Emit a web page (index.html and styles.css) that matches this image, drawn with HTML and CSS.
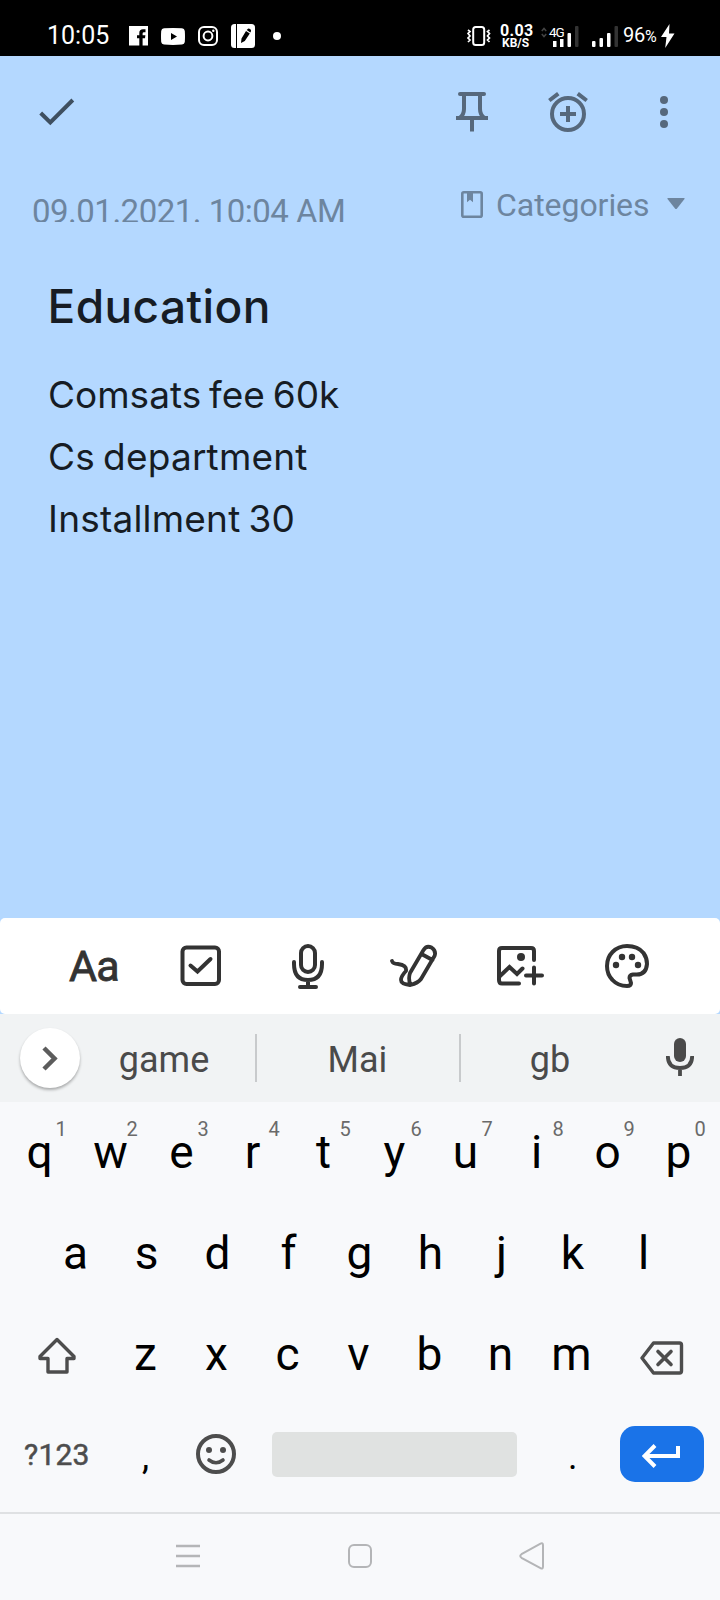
FILE: index.html
```html
<!DOCTYPE html>
<html lang="en">
<head>
<meta charset="utf-8">
<title>Note</title>
<link rel="stylesheet" href="styles.css">
</head>
<body>
<div class="screen">
  <div class="status">
    <span class="clock">10:05</span>
    <svg class="st-fb" width="20" height="20" viewBox="0 0 20 20"><path fill="#fff" d="M0 0H19V19.5H13.6V12.3H16L16.4 9.2H13.6V7.4Q13.6 6.2 15 6.2H16.5V3.3H14Q10.3 3.3 10.3 7V9.2H8V12.3H10.3V19.5H0Z"/></svg>
    <svg class="st-yt" width="24" height="17" viewBox="0 0 24 17"><path fill="#fff" fill-rule="evenodd" d="M3 .3Q12-.3 21 .3Q23.5.6 23.8 3Q24.2 8.500 23.800 14Q23.500 16.300 21 16.600Q12 17.200 3 16.600Q.500 16.300.2 14Q-.2 8.500.2 3Q.500.600 3 .3ZM10 5V12L16 8.500Z"/></svg>
    <svg class="st-ig" width="20" height="20" viewBox="0 0 20 20" fill="none" stroke="#fff" stroke-width="2"><rect x="1" y="1" width="18" height="18" rx="5"/><circle cx="10" cy="10" r="4.400"/><circle cx="15.300" cy="4.700" r="1.200" fill="#fff" stroke="none"/></svg>
    <svg class="st-note" width="24" height="24" viewBox="0 0 24 24"><rect width="24" height="24" rx="3.500" fill="#fff"/><path d="M5.500 0V24" stroke="#000" stroke-width="1"/><path d="M10 19L10.500 14.500L15 7L18.800 9.500L13.800 17ZM15.700 6L17 4.700Q18 4.300 19.400 5.200Q20.300 6 20 7.200L19.300 8.500Z"/></svg>
    <i class="st-dot"></i>
    <svg class="st-vib" width="24" height="20" viewBox="0 0 24 20" fill="none" stroke="#fff" stroke-width="2"><rect x="6.200" y="1" width="11" height="18" rx="2.500"/><path stroke-width="1.700" d="M1 4L3 5.500L1 7.500L3 10L1 12L3 14L1 16M22.500 4L20.500 5.500L22.500 7.500L20.500 10L22.500 12L20.500 14L22.500 16"/></svg>
    <div class="speed"><b class="speed-n">0.03</b><b class="speed-u">KB/S</b></div>
    <div class="mobile">
      <svg width="38" height="22" viewBox="0 0 38 22"><path d="M.8 5L3 2.500L5.200 5M.8 8L3 10.500L5.200 8" fill="none" stroke="#444" stroke-width="1.500"/><g fill="#fff"><rect x="12" y="15" width="3.500" height="6"/><rect x="19" y="13" width="3.500" height="8"/><rect x="26.500" y="7" width="3.500" height="14" rx="1"/></g><rect x="34" y="0" width="3.500" height="21" rx="1" fill="#333"/></svg>
      <span class="gen">4G</span>
    </div>
    <svg class="st-bars" width="26" height="21" viewBox="0 0 26 21"><g fill="#fff"><rect x="0" y="15" width="3.500" height="6" rx="1"/><rect x="7.500" y="12" width="3.500" height="9" rx="1"/><rect x="15" y="7" width="3.500" height="14" rx="1"/></g><rect x="22.500" y="0" width="3.500" height="21" rx="1" fill="#333"/></svg>
    <span class="batt">96<small>%</small></span>
    <svg class="st-bolt" width="14" height="24" viewBox="0 0 14 24"><path fill="#fff" d="M8.500 0L0 13H5.500L4.200 24L13.500 9.500H8Z"/></svg>
  </div>

  <div class="note">
    <div class="appbar">
      <svg class="ab-check" width="36" height="28" viewBox="0 0 36 28"><path d="M1.700 15L11.300 24.500L33.800 2" fill="none" stroke="#3e4f60" stroke-width="4"/></svg>
      <svg class="ab-pin" width="32" height="40" viewBox="0 0 32 40"><g fill="none" stroke="#56687c" stroke-width="4"><path d="M4 2H28" stroke-linecap="round"/><path d="M8 2V17Q8 23 3.500 26M24 2V17Q24 23 28.500 26"/><path d="M0 26H32M16 27V39.500"/></g></svg>
      <svg class="ab-alarm" width="40" height="40" viewBox="0 0 40 40" fill="none" stroke="#56687c" stroke-width="4"><circle cx="20" cy="22" r="16"/><path d="M20 14V30M12 22H28M1.300 8.500L10.300 1.700M29.700 1.700L38.700 8.500"/></svg>
      <svg class="ab-more" width="8" height="32" viewBox="0 0 8 32" fill="#56687c"><circle cx="4" cy="4" r="4"/><circle cx="4" cy="16" r="4"/><circle cx="4" cy="28" r="4"/></svg>
    </div>
    <div class="meta">
      <div class="date">09.01.2021. 10:04 AM</div>
      <svg class="m-book" width="22" height="27" viewBox="0 0 22 27"><rect x="1.300" y="1.300" width="19.400" height="24.400" rx="1.500" fill="none" stroke="#6d859f" stroke-width="2.600"/><path fill="#6d859f" d="M6 1H12V11.300L9 8.800L6 11.300Z"/></svg>
      <span class="cat">Categories</span>
      <svg class="m-caret" width="18" height="12" viewBox="0 0 18 12"><path fill="#6d859f" d="M1 0H17Q18 0 17.500 1L10 10.500Q9 11.500 8 10.500L.5 1Q0 0 1 0Z"/></svg>
    </div>
    <h1 class="title">Education</h1>
    <div class="line l1">Comsats fee 60k</div>
    <div class="line l2">Cs department</div>
    <div class="line l3">Installment 30</div>
  </div>

  <div class="tools">
    <span class="aa">Aa</span>
    <svg class="t-box" width="42" height="42" viewBox="0 0 42 42" fill="none" stroke="#333" stroke-width="4"><rect x="2.500" y="2.500" width="36.500" height="36.500" rx="4"/><path d="M10.500 20.500L17.500 26.500L30.500 14" stroke-linecap="round"/></svg>
    <svg class="t-mic" width="34" height="46" viewBox="0 0 34 46" fill="none" stroke="#333" stroke-width="4" stroke-linecap="round"><rect x="10" y="3" width="14" height="26" rx="7"/><path d="M3 19V21Q3 37 17 37Q31 37 31 21V19M17 37V42M9 44H25"/></svg>
    <svg class="t-draw" width="48" height="44" viewBox="0 0 48 44" fill="none" stroke="#333" stroke-width="3.800" stroke-linecap="round" stroke-linejoin="round"><path d="M2 17Q3 20 8 20Q17 21 16 27Q11 32 11 36Q11 40 20 41M33.500 6Q36.500 1 41.500 3.500Q46.500 7 44.500 12L31 35Q28 39 20.500 41Q18 35 20 29ZM31.500 10L42.500 16"/></svg>
    <svg class="t-img" width="48" height="42" viewBox="0 0 48 42" fill="none" stroke="#333" stroke-width="4" stroke-linecap="round"><path d="M38 15V6Q38 3 35 3H6Q3 3 3 6V35Q3 38.500 6 38.500H23M3.500 31.500L13.500 22L21 29L26.500 23.500M38 22.500V38.500M30 30.500H46"/><circle cx="25" cy="12" r="4" fill="#333" stroke="none"/></svg>
    <svg class="t-pal" width="44" height="44" viewBox="0 0 44 44"><path d="M22 2Q33 2 38.500 9Q42 14 42 20Q41 31 31 30.500H28Q24.500 31 24.500 34L26 39Q26 42 22 42Q13 42 7.500 36Q2 30.500 2 22Q2 13.500 7.500 8Q13.500 2 22 2Z" fill="none" stroke="#333" stroke-width="4" stroke-linejoin="round"/><g fill="#333"><circle cx="11" cy="21" r="3.200"/><circle cx="17" cy="13" r="3.200"/><circle cx="27" cy="13" r="3.200"/><circle cx="33" cy="21" r="3.200"/></g></svg>
  </div>

  <div class="suggest">
    <span class="round"><svg width="16" height="25" viewBox="0 0 16 25"><path d="M2 2L12.500 12.500L2 23" fill="none" stroke="#5c5c5c" stroke-width="4.500"/></svg></span>
    <span class="word">game</span><i class="sep"></i><span class="word">Mai</span><i class="sep"></i><span class="word">gb</span>
    <svg class="s-mic" width="28" height="38" viewBox="0 0 28 38"><rect x="8" y="0" width="12" height="24" rx="6" fill="#4a4a4a"/><path d="M1.800 18Q2 30 14 30Q26 30 26.200 18M14 30V38" fill="none" stroke="#4a4a4a" stroke-width="3.800"/></svg>
  </div>

  <div class="keyboard">
    <div class="row">
      <div class="key">q<sup>1</sup></div><div class="key">w<sup>2</sup></div><div class="key">e<sup>3</sup></div><div class="key">r<sup>4</sup></div><div class="key">t<sup>5</sup></div><div class="key">y<sup>6</sup></div><div class="key">u<sup>7</sup></div><div class="key">i<sup>8</sup></div><div class="key">o<sup>9</sup></div><div class="key">p<sup>0</sup></div>
    </div>
    <div class="row middle">
      <div class="key">a</div><div class="key">s</div><div class="key">d</div><div class="key">f</div><div class="key">g</div><div class="key">h</div><div class="key">j</div><div class="key">k</div><div class="key">l</div>
    </div>
    <div class="row lower">
      <div class="side"><svg width="40" height="38" viewBox="0 0 40 38"><path d="M20 2.500L37 19.500V21.500H30V35H11V21.500H3V19.500Z" fill="none" stroke="#4d4d4d" stroke-width="3.400" stroke-linejoin="round"/></svg></div>
      <div class="key">z</div><div class="key">x</div><div class="key">c</div><div class="key">v</div><div class="key">b</div><div class="key">n</div><div class="key">m</div>
      <div class="side back"><svg width="44" height="34" viewBox="0 0 44 34"><path d="M13.500 2H39.500Q41.500 2 41.500 4V30Q41.500 32 39.500 32H13.500L2 17Z" fill="none" stroke="#4d4d4d" stroke-width="3.400" stroke-linejoin="round"/><path d="M18 10.500L31 23.500M31 10.500L18 23.500" stroke="#4d4d4d" stroke-width="3.600" stroke-linecap="round"/></svg></div>
    </div>
    <div class="bottom">
      <span class="sym">?123</span>
      <span class="punct">,</span>
      <svg class="emoji" width="40" height="40" viewBox="0 0 40 40"><g fill="none" stroke="#4d4d4d"><circle cx="20" cy="20" r="18" stroke-width="4"/><path d="M13 26Q20 31.500 27 26" stroke-width="3.600" stroke-linecap="round"/></g><circle cx="13" cy="16" r="3" fill="#4d4d4d"/><circle cx="27" cy="16" r="3" fill="#4d4d4d"/></svg>
      <span class="space"></span>
      <span class="punct dot">.</span>
      <span class="enter"><svg width="39" height="24" viewBox="0 0 39 24"><path d="M36 2V12H3M13 1.500L2.500 12L13 22.500" fill="none" stroke="#fff" stroke-width="4"/></svg></span>
    </div>
  </div>

  <div class="nav">
    <svg width="24" height="24" viewBox="0 0 24 24" stroke="#b4b5b7" stroke-width="2.400"><path d="M0 2H24M0 12H24M0 22H24"/></svg>
    <svg width="24" height="24" viewBox="0 0 24 24"><rect x="1" y="1" width="22" height="22" rx="5" fill="none" stroke="#b4b5b7" stroke-width="2"/></svg>
    <svg width="26" height="28" viewBox="0 0 26 28"><path d="M21.500 1.600Q24 .6 24 3V24.500Q24 27.500 21.500 26.200L2.500 15.800Q0 14 2.500 12.200Z" fill="none" stroke="#b4b5b7" stroke-width="2"/></svg>
  </div>
</div>
</body>
</html>
```
FILE: styles.css
```css
* { box-sizing: border-box; }
body { margin: 0; font-family: Roboto, "Liberation Sans", sans-serif; }
svg { display: block; flex: none; }
.screen { width: 720px; height: 1600px; display: flex; flex-direction: column; background: #f8f9fb; overflow: hidden; }

/* status bar */
.status { height: 56px; background: #000; color: #fff; display: flex; align-items: flex-start; white-space: nowrap; }
.clock { width: 82px; margin: 21px 0 0 47px; font-size: 25px; line-height: 29px; }
.st-fb { margin-top: 26px; }
.st-yt { margin: 27.500px 0 0 12px; }
.st-ig { margin: 26px 0 0 13px; }
.st-note { margin: 24px 0 0 13px; }
.st-dot { width: 8px; height: 8px; border-radius: 50%; background: #fff; margin: 32px 0 0 18px; flex: none; }
.st-vib { margin: 26px 0 0 186px; }
.speed { width: 41px; margin: 23px 0 0 9px; display: flex; flex-direction: column; }
.speed-n { font: 700 16px/15px Roboto, sans-serif; letter-spacing: .3px; }
.speed-u { font: 700 12px/10px Roboto, sans-serif; padding-left: 2px; }
.mobile { width: 51px; margin-top: 26px; position: relative; }
.gen { position: absolute; left: 8px; top: 0; font-size: 13.500px; line-height: 13px; letter-spacing: -1px; }
.st-bars { margin-top: 26px; }
.batt { width: 38px; margin: 24px 0 0 5px; font-size: 20px; line-height: 22px; letter-spacing: -.3px; }
.batt small { font-size: 16px; }
.st-bolt { margin-top: 24px; }

/* note */
.note { height: 862px; background: #b4d8ff; }
.appbar { height: 112px; display: flex; align-items: center; }
.ab-check { margin-left: 39px; }
.ab-pin { margin-left: 381px; }
.ab-alarm { margin-left: 60px; }
.ab-more { margin-left: 72px; }
.meta { height: 54px; display: flex; align-items: flex-start; color: #6d859f; }
.date { width: 428px; height: 36px; margin: 18px 0 0 32px; overflow: hidden; font-size: 33px; line-height: 52px; white-space: nowrap; letter-spacing: -.5px; }
.m-book { margin: 23px 0 0 1px; }
.cat { width: 171px; margin: 17px 0 0 13px; font-size: 32px; line-height: 40px; letter-spacing: -.05px; }
.m-caret { margin-top: 30px; }
.title { margin: 54px 0 0 47.500px; font: 500 46px/60px Inter, sans-serif; color: #161c24; letter-spacing: .4px; }
.line { margin-left: 48px; font: 400 37px/62px Inter, sans-serif; color: #161c24; white-space: nowrap; letter-spacing: .2px; word-spacing: -2.500px; }
.l1 { margin-top: 28px; letter-spacing: 0; }

/* formatting tools */
.tools { height: 96px; background: #fff; border-radius: 5px; display: flex; align-items: center; color: #333; box-shadow: 0 0 0 6px #b4d8ff; }
.aa { width: 111px; margin-left: 69px; font-size: 43px; line-height: 50px; letter-spacing: -.8px; -webkit-text-stroke: .8px #333; }
.t-mic { margin-left: 69px; }
.t-draw { margin-left: 65px; }
.t-img { margin-left: 58px; }
.t-pal { margin-left: 61px; }

/* suggestions */
.suggest { height: 88px; background: #f1f3f4; display: grid; grid-template-columns: 74px 181px 2px 202px 2px 179px 80px; align-items: center; color: #4a4a4a; position: relative; }
.round { width: 60px; height: 60px; border-radius: 50%; background: #fff; margin-left: 20px; display: flex; align-items: center; justify-content: center; box-shadow: 0 2px 3px rgba(0,0,0,.3); }
.word { font-size: 36px; line-height: 42px; text-align: center; padding: 3px 1px 0 0; }
.sep { height: 48px; background: #c8cacc; }
.s-mic { justify-self: center; margin-bottom: 2px; }

/* keyboard */
.keyboard { height: 410px; color: #000; font-size: 46px; }
.row { height: 101px; display: flex; padding-left: 4px; }
.middle { padding-left: 40px; }
.key { width: 71px; flex: none; position: relative; line-height: 101px; text-align: center; }
.key sup { position: absolute; left: 51px; top: 17px; width: 12px; font-size: 20px; line-height: 20px; color: #6a6a6a; }
.side { width: 106px; display: flex; align-items: center; justify-content: center; padding-top: 3px; }
.back { width: 110px; padding-top: 7px; }
.bottom { height: 98px; display: flex; align-items: center; }
.sym { width: 113px; margin-left: 24px; padding-top: 2px; font-size: 30px; line-height: 40px; letter-spacing: .2px; color: #4d4d4d; -webkit-text-stroke: .5px #4d4d4d; }
.punct { width: 59px; font-size: 36px; line-height: 42px; padding: 6px 0 0 5px; }
.emoji { margin-right: 36px; }
.space { width: 245px; height: 45px; border-radius: 5px; background: #e0e2e1; }
.dot { width: 103px; padding-left: 51px; }
.enter { width: 84px; height: 56px; border-radius: 15px; background: #1a73e8; display: flex; align-items: center; justify-content: center; padding: 4px 2px 0 0; }

/* system navigation */
.nav { height: 88px; border-top: 2px solid #dfe1e3; display: flex; align-items: center; justify-content: space-between; padding: 0 175px 2px 176px; }
```
